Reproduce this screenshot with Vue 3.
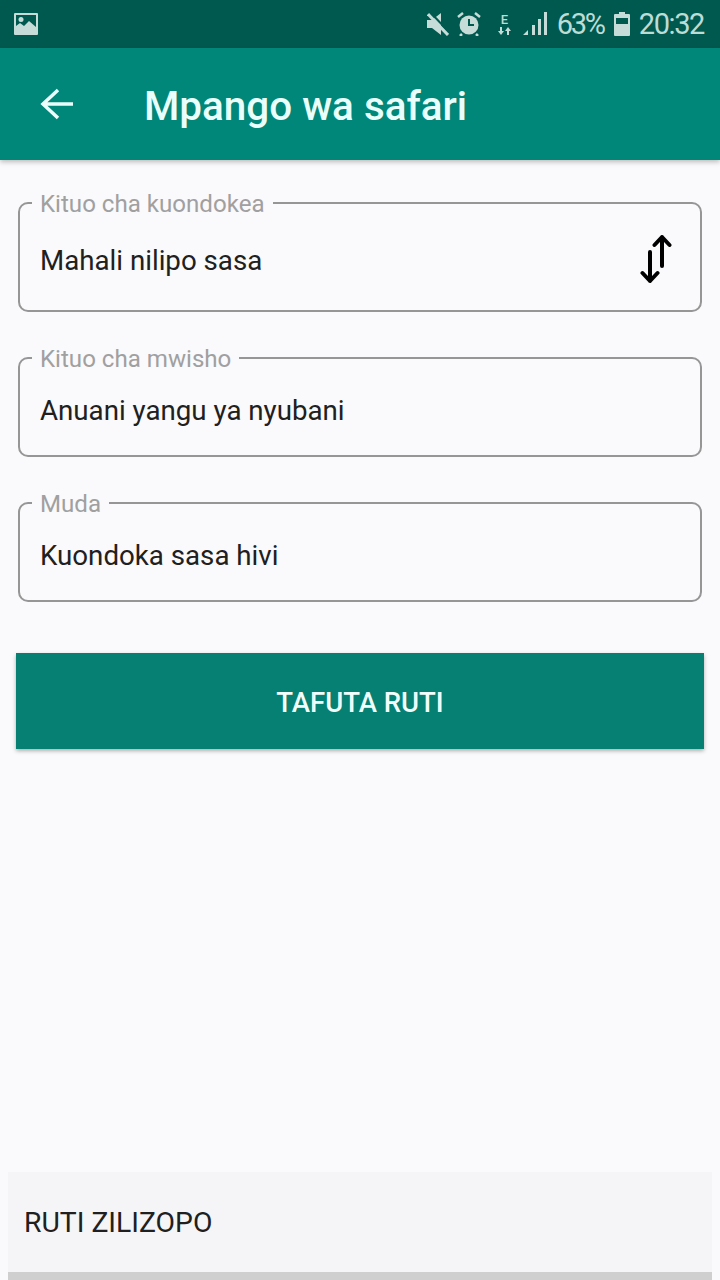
<script setup>
// Trip form fields
const fields = [
  { label: 'Kituo cha kuondokea', value: 'Mahali nilipo sasa', swap: true },
  { label: 'Kituo cha mwisho', value: 'Anuani yangu ya nyubani' },
  { label: 'Muda', value: 'Kuondoka sasa hivi' }
]
</script>

<template>
  <div class="screen">
    <div class="status-bar">
      <svg class="pic-icon" width="24" height="22" viewBox="0 0 24 22">
        <path fill="#c6dcd8" fill-rule="evenodd" d="M1 0h22a1 1 0 0 1 1 1v20a1 1 0 0 1-1 1H1a1 1 0 0 1-1-1V1a1 1 0 0 1 1-1zm1 2v11l4-3 4 3 5-5 7 6V2z" />
        <circle cx="7" cy="6.500" r="2.500" fill="#c6dcd8" />
      </svg>
      <div class="status-right">
        <svg width="22" height="24" viewBox="0 0 22 24">
          <path fill="#c6dcd8" d="M0 8h5l9-7v22l-9-7H0z" />
          <path stroke="#c6dcd8" stroke-width="3" d="M1 2l20 21" />
          <path stroke="#00594f" stroke-width="2" d="M4 1l18 19" />
        </svg>
        <svg class="alarm" width="24" height="24" viewBox="0 0 24 24">
          <circle cx="12" cy="13" r="9.500" fill="#c6dcd8" />
          <path d="M12 7v6h5" fill="none" stroke="#00594f" stroke-width="2" />
          <path d="M1 5l5-4M23 5l-5-4M5 22l-2 2M19 22l2 2" fill="none" stroke="#c6dcd8" stroke-width="2.500" />
        </svg>
        <div class="net">
          <span class="net-e">E</span>
          <svg width="13" height="8" viewBox="0 0 13 8">
            <path fill="#c6dcd8" d="M2 0h2v4h2L3 8 0 4h2zM9 8h2V4h2l-3-4-3 4h2z" />
          </svg>
        </div>
        <svg class="signal" width="24" height="24" viewBox="0 0 24 24">
          <path fill="#c6dcd8" d="M0 23l5-5v5zM9 23V13h3v10zM15 23V7h3v16zM21 23V0h3v23z" />
        </svg>
        <span class="percent">63%</span>
        <svg class="battery" width="16" height="24" viewBox="0 0 16 24">
          <path fill="#c6dcd8" fill-rule="evenodd" d="M5 0h6v2h4a1 1 0 0 1 1 1v20a1 1 0 0 1-1 1H1a1 1 0 0 1-1-1V3a1 1 0 0 1 1-1h4zM2 6v6h12V6z" />
        </svg>
        <span class="clock">20:32</span>
      </div>
    </div>

    <header class="app-bar">
      <svg class="back" width="33" height="32" viewBox="0 0 33 32">
        <path d="M33 16H3M18 2L3 16l15 14" fill="none" stroke="#eafffb" stroke-width="3.500" />
      </svg>
      <h1 class="title">Mpango wa safari</h1>
    </header>

    <main class="content">
      <div class="form">
        <div v-for="(f, i) in fields" :key="f.label" class="field" :class="{ first: i === 0 }">
          <span class="field-label">{{ f.label }}</span>
          <span class="field-value">{{ f.value }}</span>
          <svg v-if="f.swap" class="swap" width="34" height="50" viewBox="0 0 34 50">
            <path d="M23 3v29M15.500 11l7.500-8 7.500 8M11 18v29M3.500 39l7.500 8 7.500-8" fill="none" stroke="#000" stroke-width="4" stroke-linecap="round" stroke-linejoin="round" />
          </svg>
        </div>
      </div>

      <button class="search-btn">TAFUTA RUTI</button>
    </main>

    <div class="routes">
      <div class="routes-head">RUTI ZILIZOPO</div>
      <div class="routes-edge"></div>
    </div>
  </div>
</template>

<style scoped>
.screen {
  width: 720px;
  height: 1280px;
  display: flex;
  flex-direction: column;
  overflow: hidden;
  background: #faf9fb;
  font-family: Roboto, "Liberation Sans", sans-serif;
}

.status-bar {
  height: 48px;
  flex: none;
  display: flex;
  align-items: center;
  justify-content: space-between;
  padding: 0 16px 0 14px;
  background: #00594f;
}

.status-right {
  display: flex;
  align-items: center;
  color: #bcdcd6;
}

.alarm {
  margin-left: 8px;
}

.net {
  display: flex;
  flex-direction: column;
  align-items: center;
  margin-left: 17px;
}

.net-e {
  font-size: 13px;
  line-height: 14px;
  font-weight: 500;
}

.signal {
  margin-left: 12px;
}

.percent {
  margin-left: 10px;
  font-size: 29px;
  letter-spacing: -2.3px;
}

.battery {
  margin-left: 10px;
}

.clock {
  margin-left: 9px;
  font-size: 29px;
  letter-spacing: -1.4px;
}

.app-bar {
  height: 112px;
  flex: none;
  display: flex;
  align-items: center;
  position: relative;
  padding-left: 40px;
  background: #00877a;
  box-shadow: 0 2px 5px rgba(0, 0, 0, 0.25);
}

.back {
  flex: none;
}

.title {
  margin: 4px 0 0 71px;
  color: #eafffb;
  font-size: 40.4px;
  font-weight: 500;
}

.content {
  flex: 1;
  padding: 42px 16px 0;
}

.form {
  display: flex;
  flex-direction: column;
  gap: 45px;
  padding: 0 2px;
}

.field {
  height: 100px;
  display: flex;
  align-items: center;
  justify-content: space-between;
  position: relative;
  box-sizing: border-box;
  padding: 7px 27px 0 20px;
  border: 2px solid #969696;
  border-radius: 10px;
}

.field.first {
  height: 110px;
}

.field-label {
  position: absolute;
  top: -14px;
  left: 12px;
  padding: 0 8px;
  background: #faf9fb;
  color: #a0a0a0;
  font-size: 24.1px;
  line-height: 28px;
}

.field-value {
  color: #202020;
  font-size: 27.7px;
}

.swap {
  margin-top: -4px;
}

.search-btn {
  display: block;
  width: 688px;
  height: 96px;
  margin-top: 51px;
  padding: 2px 0 0;
  border: none;
  background: #058073;
  color: #f2fffc;
  font-family: inherit;
  font-size: 27.5px;
  font-weight: 500;
  box-shadow: 0 2px 4px rgba(0, 0, 0, 0.3);
}

.routes {
  flex: none;
  margin: 0 8px;
}

.routes-head {
  height: 100px;
  display: flex;
  align-items: center;
  padding-left: 16px;
  background: #f5f4f7;
  color: #202020;
  font-size: 28.3px;
}

.routes-edge {
  height: 8px;
  background: #cfcfcf;
}
</style>
